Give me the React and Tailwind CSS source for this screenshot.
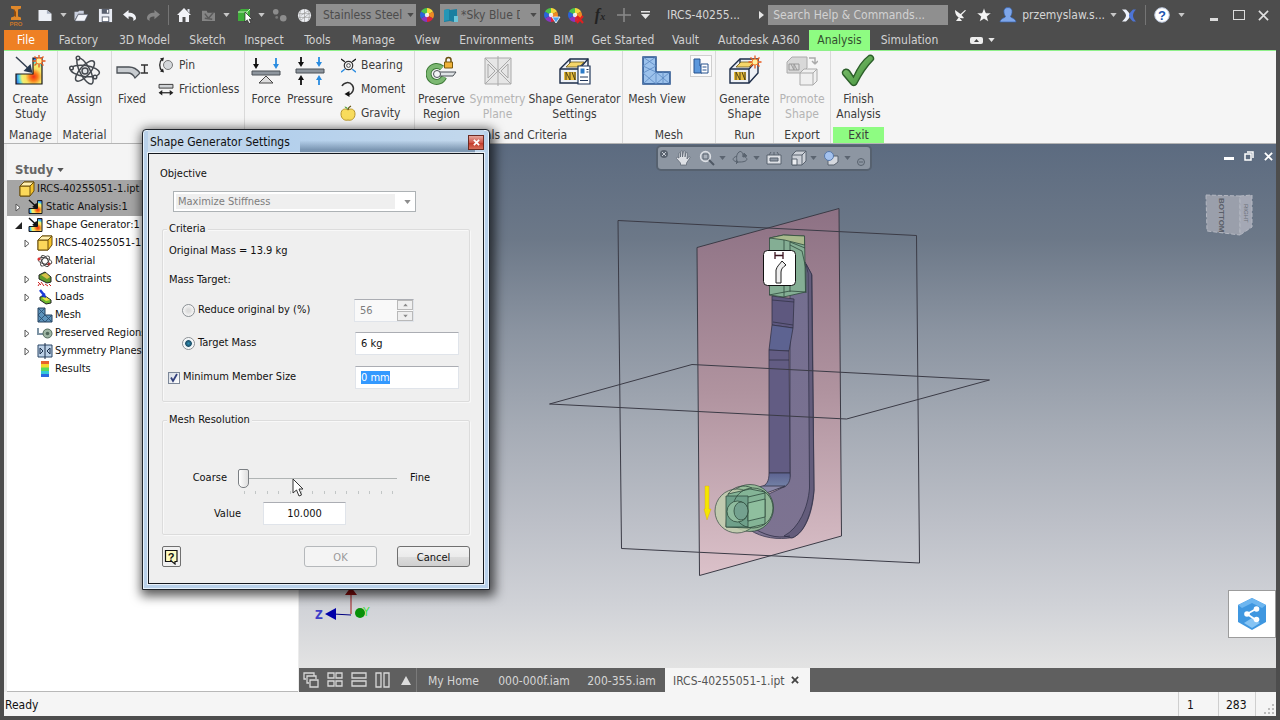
import React, { useEffect, useRef } from 'react'

/* ---------- shared bits ---------- */

const Caret = ({ className = 'text-[#c8c8c8]' }) => (
  <svg viewBox="0 0 8 5" className={'h-[4px] w-[7px] ' + className} aria-hidden="true">
    <path d="M0 0h8L4 5z" fill="currentColor" />
  </svg>
)

const Tool = ({ label, className = 'w-6', children }) => (
  <button type="button" aria-label={label} className={'flex h-[30px] shrink-0 items-center justify-center ' + className}>
    {children}
  </button>
)

const ColorWheel = ({ badge }) => (
  <svg viewBox="0 0 18 18" className="h-[18px] w-[18px]" aria-hidden="true">
    <path d="M8 9V2a7 7 0 0 1 6 3.5z" fill="#f5d93a" />
    <path d="M8 9l6-3.5a7 7 0 0 1 0 7z" fill="#f08a24" />
    <path d="M8 9l6 3.5A7 7 0 0 1 8 16z" fill="#d8243c" />
    <path d="M8 9v7a7 7 0 0 1-6-3.5z" fill="#8a35c0" />
    <path d="M8 9l-6 3.500a7 7 0 0 1 0-7z" fill="#2b63d8" />
    <path d="M8 9L2 5.500A7 7 0 0 1 8 2z" fill="#4cc24a" />
    <circle cx="8" cy="9" r="2.200" fill="#fff" opacity=".85" />
    {badge === 'down' && <path d="M9 11h8l-4 6z" fill="#4aa3ee" stroke="#fff" strokeWidth=".8" />}
    {badge === 'x' && <path d="M10 10l6 7M16 10l-6 7" stroke="#e02020" strokeWidth="2" />}
  </svg>
)

/* ---------- title bar ---------- */

function TitleBar() {
  return (
    <header className="flex h-[30px] items-center pr-1 text-xs text-[#d6d6d6]">
      <Tool label="Application menu" className="w-[31px]">
        <svg viewBox="0 0 20 24" className="h-6 w-5" aria-hidden="true">
          <path d="M5 3h10v2.500l-3 1v7l3 1V17H5v-2.500l3-1v-7l-3-1z" fill="#e0882a" />
          <path d="M8 6l2 3v5l-2-1z" fill="#8a4a10" />
          <text x="10" y="23" fontSize="6" textAnchor="middle" fill="#c8762a" fontFamily="Liberation Sans" fontWeight="700">PRO</text>
        </svg>
      </Tool>
      <Tool label="New" className="w-[27px]">
        <svg viewBox="0 0 16 14" className="h-[13px] w-4" aria-hidden="true"><path d="M1 1h9l5 4v8H1z" fill="#eceff6" /><path d="M10 1v4h5z" fill="#a9b0c0" /></svg>
      </Tool>
      <Tool label="New options" className="w-[11px]"><Caret /></Tool>
      <Tool label="Open">
        <svg viewBox="0 0 16 14" className="h-[13px] w-4" aria-hidden="true"><path d="M1 12V3h4l1-1h5v3H5z" fill="#c9cfde" /><path d="M1.500 13L5 6h10.500L12 13z" fill="#f3f5fa" stroke="#5c6478" strokeWidth=".6" /></svg>
      </Tool>
      <Tool label="Save">
        <svg viewBox="0 0 16 16" className="h-[15px] w-[15px]" aria-hidden="true"><path d="M1 1h14v14H1z" fill="#e8ebf3" /><path d="M4 1h8v5H4zM4 9h8v6H4z" fill="#59606f" /><path d="M5 10h6v4H5z" fill="#fff" /><path d="M9.500 2h1.500v3H9.500z" fill="#fff" /></svg>
      </Tool>
      <Tool label="Undo">
        <svg viewBox="0 0 16 14" className="h-[13px] w-[15px]" aria-hidden="true"><path d="M7 1v3c5 0 8 2 8 6 0 1-1 2-3 3 1-4-1-5-5-5v3L1 6z" fill="#f0f2f7" /></svg>
      </Tool>
      <Tool label="Redo">
        <svg viewBox="0 0 16 14" className="h-[13px] w-[15px]" aria-hidden="true"><path d="M9 1v3C4 4 1 6 1 10c0 1 1 2 3 3-1-4 1-5 5-5v3l6-5z" fill="#868686" /></svg>
      </Tool>
      <span className="mx-[3px] h-5 w-px shrink-0 bg-[#757575]" />
      <Tool label="Home">
        <svg viewBox="0 0 16 16" className="h-4 w-4" aria-hidden="true"><path d="M8 1l7 7h-2v7H9.500v-5h-3v5H3V8H1z" fill="#f1f2f7" /><path d="M11.500 2h2v4l-2-2z" fill="#dfe3ee" /></svg>
      </Tool>
      <Tool label="Team web">
        <svg viewBox="0 0 16 14" className="h-[13px] w-[15px]" aria-hidden="true"><path d="M1 2h5l1 2h8v9H1z" fill="#858585" /><path d="M4 5l4 5 5-6M4 10l8 1" stroke="#5a5a5a" strokeWidth="1.500" fill="none" /></svg>
      </Tool>
      <Tool label="Team web options" className="w-[12px]"><Caret /></Tool>
      <Tool label="Select priority">
        <svg viewBox="0 0 17 17" className="h-[17px] w-[17px]" aria-hidden="true"><path d="M2 5l3-3h9v9l-3 3H2z" fill="#3fae3a" /><path d="M2 5h9v9M11 5l3-3" stroke="#bff0b5" fill="none" /><path d="M9 5v10l2.300-2.200L13 16.500l1.800-.8-1.600-3.500h3z" fill="#fff" stroke="#222" strokeWidth=".7" /></svg>
      </Tool>
      <Tool label="Select options" className="w-[10px]"><Caret /></Tool>
      <Tool label="Local update" className="w-[26px]">
        <svg viewBox="0 0 16 16" className="h-[15px] w-[15px]" aria-hidden="true"><circle cx="4" cy="4" r="3" fill="#8d8d8d" /><circle cx="12" cy="11" r="3.500" fill="#8d8d8d" /><circle cx="5" cy="10" r="1.500" fill="#777" /></svg>
      </Tool>
      <Tool label="Material browser">
        <svg viewBox="0 0 16 16" className="h-[15px] w-[15px]" aria-hidden="true"><circle cx="8" cy="8" r="7" fill="#eceef2" /><path d="M1.500 6h13M1.500 10h13M8 1v14M4 2.500C2.500 6 2.500 10 4 13.500M12 2.500c1.500 3.500 1.500 7.500 0 11M4 8l8-5M4 13l9-7" stroke="#999" strokeWidth=".7" fill="none" /></svg>
      </Tool>
      <div className="relative flex shrink-0 items-center">
        <select aria-label="Material" className="h-[22px] w-[100px] appearance-none bg-[#8f8f8f] pl-[7px] text-[#4c4c4c]">
          <option>Stainless Steel</option>
        </select>
        <span className="pointer-events-none absolute right-[2px]"><Caret className="text-[#4a4a4a]" /></span>
      </div>
      <Tool label="Appearance"><ColorWheel /></Tool>
      <div className="relative flex shrink-0 items-center">
        <select aria-label="Appearance style" className="h-[22px] w-[100px] appearance-none bg-[#8f8f8f] pr-[20px] pl-[21px] text-[#4c4c4c]">
          <option>*Sky Blue Dark</option>
        </select>
        <svg viewBox="0 0 15 15" className="pointer-events-none absolute left-[4px] h-[15px] w-[15px]" aria-hidden="true"><path d="M0 2l5-1 1 1 7-1v11l-3 2-4-1-6 1z" fill="#197fa0" /><path d="M0 2l5-1v11l-5 1z" fill="#2596b6" /><path d="M10 8h4v6h-4z" fill="#6cc6da" /></svg>
        <span className="pointer-events-none absolute right-[3px]"><Caret className="text-[#4a4a4a]" /></span>
      </div>
      <Tool label="Adjust appearance"><ColorWheel badge="down" /></Tool>
      <Tool label="Clear appearance"><ColorWheel badge="x" /></Tool>
      <Tool label="Parameters"><span className="font-['Liberation_Serif',serif] text-base font-bold text-[#222] italic">f<span className="text-[10px]">x</span></span></Tool>
      <Tool label="Add command">
        <svg viewBox="0 0 14 14" className="h-[14px] w-[14px]" aria-hidden="true"><path d="M7 0v14M0 7h14" stroke="#8a8a8a" strokeWidth="1.500" /></svg>
      </Tool>
      <Tool label="Customize toolbar" className="w-[18px]">
        <svg viewBox="0 0 9 8" className="h-2 w-[9px]" aria-hidden="true"><path d="M0 0h9v1.500H0zM0 3h9L4.500 8z" fill="#e6e6e6" /></svg>
      </Tool>
      <div className="min-w-0 flex-1 pl-[13px] whitespace-nowrap">IRCS-40255...</div>
      <Tool label="Expand search" className="w-[14px]"><svg viewBox="0 0 5 8" className="h-2 w-[5px]" aria-hidden="true"><path d="M0 0l5 4-5 4z" fill="#e6e6e6" /></svg></Tool>
      <input aria-label="Search" placeholder="Search Help & Commands..." className="h-5 w-[180px] shrink-0 bg-[#8f8f8f] px-[5px] placeholder:text-[#d2d2d2]" />
      <Tool label="Communication center">
        <svg viewBox="0 0 14 14" className="h-[14px] w-[14px]" aria-hidden="true"><path d="M2 2c0 6 4 9 9 8l-2.500-3L13 2.500 12 2 7.500 6z" fill="#f2f2f2" /><path d="M3 13l3-4 3 4z" fill="#f2f2f2" /></svg>
      </Tool>
      <Tool label="Favorites">
        <svg viewBox="0 0 16 16" className="h-4 w-4" aria-hidden="true"><path d="M8 .5l2 5.300 5.500.2-4.300 3.500 1.500 5.500L8 12l-4.700 3 1.500-5.500L.5 6 6 5.800z" fill="#f4f4f4" stroke="#333" strokeWidth=".6" /></svg>
      </Tool>
      <button type="button" className="flex shrink-0 items-center gap-[5px] whitespace-nowrap">
        <svg viewBox="0 0 18 16" className="ml-[3px] h-4 w-[18px]" aria-hidden="true"><path d="M9 .5c3 0 4.500 2 4 5-.2 2-1 3-1.500 4 0 1.500 5 1.500 5.500 5.500H1C1.500 11 6.500 11 6.500 9.500 6 8.500 5.200 7.500 5 5.500c-.5-3 1-5 4-5z" fill="#7ea6ea" stroke="#3763ad" strokeWidth=".7" /></svg>
        <span>przemyslaw.s...</span>
        <Caret />
      </button>
      <Tool label="Exchange apps" className="mr-1 w-6">
        <svg viewBox="0 0 14 12" className="h-[13px] w-[14px]" aria-hidden="true"><path d="M0 0h4c2 2 4 4 4 6s-2 4-4 6H0c2-2 4-4 4-6S2 2 0 0z" fill="#eef2fb" /><path d="M14 0h-3C9 2 7 4 7 6s2 4 4 6h3c-2-2-3-4-3-6s1-4 3-6z" fill="#4d74d6" /></svg>
      </Tool>
      <span className="h-5 w-px shrink-0 bg-[#757575]" />
      <Tool label="Help" className="w-8">
        <svg viewBox="0 0 16 16" className="h-4 w-4" aria-hidden="true"><circle cx="8" cy="8" r="7.300" fill="#fff" stroke="#b8c4da" /><text x="8" y="12.500" textAnchor="middle" fontSize="13" fontWeight="700" fontFamily="Liberation Sans" fill="#1c55b0">?</text></svg>
      </Tool>
      <Caret />
      <Tool label="Minimize" className="ml-4 w-[25px]"><span className="mt-2 h-[3px] w-2 bg-[#dcdcdc]" /></Tool>
      <Tool label="Maximize" className="w-[25px]"><span className="h-[10px] w-3 border border-[#dcdcdc]" /></Tool>
      <Tool label="Close" className="w-[25px]"><svg viewBox="0 0 12 12" className="h-[11px] w-[11px]" aria-hidden="true"><path d="M1 1l10 10M11 1L1 11" stroke="#e0e0e0" strokeWidth="1.800" /></svg></Tool>
    </header>
  )
}

/* ---------- ribbon ---------- */

const TABS = [
  ['Factory', 'w-[61px]'], ['3D Model', 'w-[71px]'], ['Sketch', 'w-[55px]'], ['Inspect', 'w-[58px]'], ['Tools', 'w-[49px]'],
  ['Manage', 'w-[63px]'], ['View', 'w-[45px]'], ['Environments', 'w-[93px]'], ['BIM', 'w-[41px]'], ['Get Started', 'w-[78px]'],
  ['Vault', 'w-[47px]'], ['Autodesk A360', 'w-[100px]'],
]

function Tabs() {
  return (
    <nav className="mx-1 flex h-5 items-stretch text-xs text-[#d2d2d2]">
      <button type="button" className="w-11 bg-[#ee8024] text-white">File</button>
      {TABS.map(([t, w]) => (
        <button key={t} type="button" className={'shrink-0 whitespace-nowrap ' + w}>{t}</button>
      ))}
      <button type="button" className="w-[61px] bg-[#8efc82] text-[#33502f]">Analysis</button>
      <button type="button" className="w-[79px]">Simulation</button>
      <button type="button" aria-label="Ribbon display" className="ml-[21px] flex items-center gap-[5px]">
        <svg viewBox="0 0 13 7" className="h-[7px] w-[13px]" aria-hidden="true"><rect width="13" height="7" rx="2" fill="#ececec" /><path d="M4 5l2.500-3L9 5z" fill="#444" /></svg>
        <Caret className="text-[#e6e6e6]" />
      </button>
    </nav>
  )
}

const Big = ({ icon, children, className = '', disabled }) => (
  <button type="button" disabled={disabled} className={'flex shrink-0 flex-col items-center text-center leading-[15px] whitespace-nowrap ' + (disabled ? 'text-[#b4b4b4] ' : '') + className}>
    <span className="flex h-9 items-center">{icon}</span>
    <span className="mt-[3px]">{children}</span>
  </button>
)

const Small = ({ icon, children }) => (
  <button type="button" className="flex h-6 items-center gap-[5px]">
    <span className="flex w-4 justify-center">{icon}</span>{children}
  </button>
)

const Group = ({ title, hideTitle, className, exit, last, align = 'justify-center', children }) => (
  <section aria-label={title} className={'flex shrink-0 flex-col ' + (last ? '' : 'border-r border-[#d9d9d9] ') + className}>
    <div className={'flex flex-1 pt-[2px] ' + align}>{children}</div>
    {!hideTitle && <h2 className={'h-4 text-center leading-4 whitespace-nowrap ' + (exit ? 'mx-[2px] bg-[#8efc82]' : '')}>{title}</h2>}
  </section>
)

const Burst = ({ x, y }) => (
  <g transform={`translate(${x} ${y})`}>
    <path d="M0-6.500V6.500M-6.500 0H6.500M-4.500-4.500l9 9M4.500-4.500l-9 9" stroke="#e8581c" strokeWidth="1.300" />
    <circle r="3" fill="#fff0a0" stroke="#f08030" />
  </g>
)

const StudyIcon = ({ className = 'h-8 w-8', small }) => (
  <svg viewBox="0 0 32 32" className={className} aria-hidden="true">
    <defs>
      <radialGradient id="heat" cx=".68" cy=".72" r=".7">
        <stop offset="0" stopColor="#f03018" /><stop offset=".22" stopColor="#fb7a1a" /><stop offset=".45" stopColor="#f8e060" /><stop offset=".65" stopColor="#f2ee70" /><stop offset=".8" stopColor="#58d8e0" /><stop offset="1" stopColor="#2a62e8" />
      </radialGradient>
    </defs>
    <path d="M19 3h9v26H2V19h17z" fill="url(#heat)" stroke="#181818" strokeWidth={small ? 2 : 1.200} />
    <path d="M2 2l15 14" stroke={small ? '#111' : '#333f50'} strokeWidth={small ? 3 : 1.500} />
    <path d="M18.500 18l-2-9-7 7z" fill={small ? '#111' : '#26384f'} stroke={small ? '#111' : 'none'} strokeWidth="2" />
    {!small && <Burst x={25} y={6} />}
  </svg>
)

const Atom = ({ className = 'h-8 w-8' }) => (
  <svg viewBox="0 0 32 32" className={className} fill="none" stroke="#44494f" strokeWidth="1.500" aria-hidden="true">
    <ellipse cx="16" cy="16" rx="14.500" ry="5.500" transform="rotate(8 16 16)" />
    <ellipse cx="16" cy="16" rx="14.500" ry="5" transform="rotate(62 16 16)" />
    <ellipse cx="16" cy="16" rx="13" ry="5" transform="rotate(132 16 16)" />
    <circle cx="16" cy="16" r="3" fill="#e4e7ea" />
    <circle cx="9" cy="3" r="1.800" fill="#fff" /><circle cx="2.500" cy="13" r="1.800" fill="#fff" /><circle cx="26" cy="22" r="1.800" fill="#fff" />
  </svg>
)

const BoxFrame = ({ settings, burst }) => (
  <svg viewBox="0 0 34 32" className="h-8 w-[34px]" aria-hidden="true">
    <path d="M2 14L12 4h18v14l-9 10H2z" fill="#eef1f6" stroke="#1d2d48" strokeWidth="1.400" />
    <path d="M2 14h19v14M21 14l9-10M12 4v7" stroke="#1d2d48" strokeWidth="1.400" fill="none" />
    <path d="M8 12l5-5h13l-5 5z" fill="#f6d66a" stroke="#6b5b20" strokeWidth=".8" />
    <path d="M6 17h12v8H6z" fill="#e8bd3c" /><path d="M8 25v-8l4 8v-8M14 17l3 8v-8" stroke="#4c4015" strokeWidth="1" fill="none" />
    {settings && (
      <g>
        <path d="M20 11h12v18H20z" fill="#fff" stroke="#21375a" strokeWidth="1.200" /><path d="M22.500 13.500h4v5h-4z" fill="#2c7bc8" />
        <path d="M28.500 14.500h2M28.500 17h2M22 22h8M22 25.500h8" stroke="#21375a" strokeWidth="1" />
      </g>
    )}
    {burst && <Burst x={27} y={7} />}
  </svg>
)

const Mesh = ({ className = 'h-8 w-8' }) => (
  <svg viewBox="0 0 32 32" className={className} aria-hidden="true">
    <path d="M2 2h13v15h14v12H2z" fill="#9cc2ec" stroke="#24508c" strokeWidth="1.500" />
    <path d="M2 2l13 9-13 7 13 11M15 2L2 11l13 6L2 29M15 17l14 12M29 17L15 29M15 17v12M22 17v12" stroke="#5b88c0" strokeWidth=".8" fill="none" />
  </svg>
)

function Ribbon() {
  return (
    <div className="mx-1 flex h-[94px] border-t border-b border-t-[#8ff08a] border-b-[#b4b4b4] bg-[#f5f5f5] text-xs text-[#3c3c3c]">
      <Group title="Manage" className="w-[54px]">
        <Big icon={<StudyIcon />}>Create<br />Study</Big>
      </Group>
      <Group title="Material" className="w-[54px]">
        <Big icon={<Atom />}>Assign</Big>
      </Group>
      <Group title="Constraints" hideTitle align="justify-start" className="w-[133px]">
        <Big className="w-[40px]" icon={
          <svg viewBox="0 0 32 24" className="h-6 w-8" aria-hidden="true"><path d="M1 8h12c5 0 8 2 11 6l-5 5c-2-4-4-5-7-5H1z" fill="#c8ccd0" stroke="#4b5056" strokeWidth="1.300" /><path d="M25 6h7M25 14h7M28.500 6v8" stroke="#333" strokeWidth="1.400" /></svg>
        }>Fixed</Big>
        <div className="ml-[6px] flex flex-col">
          <Small icon={<svg viewBox="0 0 16 16" className="h-4 w-4" aria-hidden="true"><circle cx="10" cy="8" r="4.500" fill="#d5d8db" stroke="#777" /><path d="M4 2C1 5 1 11 4 14" stroke="#222" strokeWidth="1.300" fill="none" /><path d="M2 1.500l4-1-1 4zM2 14.500l4 1-1-4z" fill="#222" /></svg>}>Pin</Small>
          <Small icon={<svg viewBox="0 0 16 14" className="h-[13px] w-4" aria-hidden="true"><path d="M.5 1.500h15v4H.5z" fill="#d0d3d6" stroke="#333" /><path d="M2 10.500h12" stroke="#222" strokeWidth="1.300" /><path d="M0 10.500l4-3v6zM16 10.500l-4-3v6z" fill="#222" /></svg>}>Frictionless</Small>
        </div>
      </Group>
      <Group title="Loads" hideTitle align="justify-start pl-px" className="w-[170px]">
        <Big className="w-[40px]" icon={
          <svg viewBox="0 0 30 30" className="h-[30px] w-[30px]" aria-hidden="true"><path d="M1 15h28v4H1z" fill="#8d959d" stroke="#4b5056" /><path d="M15 20l7 7H8z" fill="#ddd" stroke="#444" /><path d="M5 2v7" stroke="#111" strokeWidth="1.800" /><path d="M2 8h6l-3 5z" fill="#111" /><path d="M25 2v7" stroke="#2a8ce0" strokeWidth="1.800" /><path d="M22 8h6l-3 5z" fill="#2a8ce0" /></svg>
        }>Force</Big>
        <Big className="w-[48px]" icon={
          <svg viewBox="0 0 30 30" className="h-[30px] w-[30px]" aria-hidden="true"><path d="M1 13h28v4H1z" fill="#8d959d" stroke="#4b5056" /><path d="M6 1v6M6 23v6" stroke="#111" strokeWidth="1.800" /><path d="M3 6h6l-3 5zM3 24h6l-3-5z" fill="#111" /><path d="M24 1v6M24 23v6" stroke="#2a8ce0" strokeWidth="1.800" /><path d="M21 6h6l-3 5zM21 24h6l-3-5z" fill="#2a8ce0" /></svg>
        }>Pressure</Big>
        <div className="ml-[6px] flex flex-col">
          <Small icon={<svg viewBox="0 0 16 16" className="h-[15px] w-[15px]" aria-hidden="true"><circle cx="8" cy="8" r="4.500" fill="none" stroke="#333" strokeWidth="1.300" /><circle cx="8" cy="8" r="2" fill="none" stroke="#444" /><path d="M0 1l4 3M16 1l-4 3" stroke="#111" strokeWidth="1.500" /><path d="M0 15l4-3M16 15l-4-3" stroke="#2a8ce0" strokeWidth="1.500" /></svg>}>Bearing</Small>
          <Small icon={<svg viewBox="0 0 16 16" className="h-4 w-4" aria-hidden="true"><path d="M2 5a6 6 0 1 1 6.500 8.500" fill="none" stroke="#333" strokeWidth="1.500" /><path d="M4.500 13l5-3v6z" fill="#111" /></svg>}>Moment</Small>
          <Small icon={<svg viewBox="0 0 16 16" className="h-4 w-4" aria-hidden="true"><path d="M8 5c3-2 7-1 7 4s-4 7-7 6C5 16 1 14 1 9s4-6 7-4z" fill="#f8dc5c" stroke="#b8962a" /><path d="M8 5c0-2 1-3 3-4" stroke="#6a5a1a" fill="none" strokeWidth="1.300" /><path d="M8 4C6 4 5 3 4.500 1.500c2 0 3 1 3.500 2.500z" fill="#58a03a" /></svg>}>Gravity</Small>
        </div>
      </Group>
      <Group title="Goals and Criteria" className="w-[208px]">
        <Big className="w-[50px]" icon={
          <svg viewBox="0 0 32 32" className="h-8 w-8" aria-hidden="true"><path d="M16 13A8 8 0 1 0 18 22" fill="none" stroke="#3e7a38" strokeWidth="6" /><path d="M16 13A8 8 0 1 0 18 22" fill="none" stroke="#7cb872" strokeWidth="4" /><path d="M9 17h21l-3 4H9z" fill="#dfe3e6" stroke="#4b5056" /><circle cx="11" cy="19" r="3.500" fill="#f3f5f6" stroke="#4b5056" /><path d="M20 9V5a2.500 2.500 0 0 1 5 0v4" stroke="#6a5010" fill="none" strokeWidth="1.500" /><path d="M18.500 7h8v6h-8z" fill="#efb33a" stroke="#7a5a10" /></svg>
        }>Preserve<br />Region</Big>
        <Big disabled className="w-[62px]" icon={
          <svg viewBox="0 0 28 30" className="h-[30px] w-7" fill="none" stroke="#a9a9a9" aria-hidden="true"><path d="M1 2h26v26H1z" fill="#e6e6e6" /><path d="M1 2l13 13L1 28M27 2L14 15l13 13M14 0v30M4 8v14l7-7zM24 8v14l-7-7z" /></svg>
        }>Symmetry<br />Plane</Big>
        <Big className="w-[92px]" icon={<BoxFrame settings />}>Shape Generator<br />Settings</Big>
      </Group>
      <Group title="Mesh" className="w-[93px]">
        <Big className="w-[62px]" icon={<Mesh />}>Mesh View</Big>
        <button type="button" aria-label="Mesh settings" className="mt-[2px] ml-[2px] flex h-[22px] w-[22px] items-center justify-center border border-[#cfcfcf] bg-[#fbfbfb]">
          <svg viewBox="0 0 16 16" className="h-4 w-4" aria-hidden="true"><path d="M1 1h6v7h2v7H1z" fill="#5c98dc" stroke="#24508c" /><path d="M8 6h7v9H8z" fill="#fff" stroke="#24508c" /><path d="M9.500 9h4M9.500 12h4" stroke="#24508c" /></svg>
        </button>
      </Group>
      <Group title="Run" className="w-[58px]">
        <Big icon={<BoxFrame burst />}>Generate<br />Shape</Big>
      </Group>
      <Group title="Export" className="w-[57px]">
        <Big disabled icon={
          <svg viewBox="0 0 32 32" className="h-8 w-8" aria-hidden="true"><path d="M1 7l5-5h15v11l-5 5H1z" fill="#d8d8d8" stroke="#aaa" /><path d="M3 9h10v6H3zM5 9l3 6V9l3 6" fill="none" stroke="#999" /><path d="M23 3h6v6M29 9l-3-3M29 9l3-3" stroke="#aaa" fill="none" strokeWidth="1.500" /><path d="M14 18l4-4h13v12l-4 4H14z" fill="#f0f0f0" stroke="#aaa" /><path d="M14 18h13v12M27 18l4-4" fill="none" stroke="#aaa" /></svg>
        }>Promote<br />Shape</Big>
      </Group>
      <Group title="Exit" exit last className="w-[55px]">
        <Big icon={
          <svg viewBox="0 0 34 34" className="h-[34px] w-[34px]" aria-hidden="true">
            <defs><linearGradient id="tick" x2="1" y2="1"><stop offset="0" stopColor="#86c873" /><stop offset="1" stopColor="#3e8c38" /></linearGradient></defs>
            <path d="M1.500 18c1-3 5-4 7-1l4 6C16 15 22 6 28 1.500c3-1 5 1.500 4.500 4C26 12 20 21 15.500 30c-1.500 2-4 2-5.500 0L2 20.500c-.5-1-.8-1.500-.5-2.500z" fill="url(#tick)" stroke="#2c5f2a" strokeWidth="1.400" />
          </svg>
        }>Finish<br />Analysis</Big>
      </Group>
    </div>
  )
}

/* ---------- model browser ---------- */

const Cube = () => (
  <svg viewBox="0 0 16 16" className="h-4 w-4" aria-hidden="true"><path d="M1 5l4-4h10v9l-4 5H1z" fill="#f6c42a" stroke="#6b4f0a" /><path d="M1 5h10v10H1z" fill="#fbd85a" stroke="#6b4f0a" /><path d="M1 5l4-4h10l-4 4z" fill="#fff0b0" stroke="#6b4f0a" /></svg>
)

const TREE = [
  { t: 'IRCS-40255051-1.ipt', d: 0, sel: true, icon: <Cube /> },
  { t: 'Static Analysis:1', d: 1, sel: true, arrow: 'closed', icon: <StudyIcon small className="h-4 w-4" /> },
  { t: 'Shape Generator:1', d: 1, arrow: 'open', icon: <StudyIcon small className="h-4 w-4" /> },
  { t: 'IRCS-40255051-1.ipt', d: 2, arrow: 'closed', icon: <Cube /> },
  { t: 'Material', d: 2, icon: <svg viewBox="0 0 16 16" className="h-4 w-4" fill="none" stroke="#444" aria-hidden="true"><ellipse cx="8" cy="8" rx="7" ry="3" transform="rotate(14 8 8)" /><ellipse cx="8" cy="8" rx="6" ry="3" transform="rotate(60 8 8)" /><ellipse cx="8" cy="8" rx="6" ry="3" transform="rotate(130 8 8)" /><circle cx="2" cy="6" r="1.500" fill="#d33" stroke="none" /><circle cx="12" cy="11" r="1.500" fill="#a33" stroke="none" /></svg> },
  { t: 'Constraints', d: 2, arrow: 'closed', icon: <svg viewBox="0 0 16 16" className="h-4 w-4" aria-hidden="true"><path d="M2 4l6-3 6 5v5l-4 1-8-4z" fill="#5f9a2c" stroke="#222" /><path d="M4 4l5-2 4 4-3 2z" fill="#d8c04a" /><path d="M1 11l3 3M4 11l3 4M8 13l3 2M12 13l2 2M1 15l2-3" stroke="#c22" /></svg> },
  { t: 'Loads', d: 2, arrow: 'closed', icon: <svg viewBox="0 0 16 16" className="h-4 w-4" aria-hidden="true"><path d="M3 8l5-1 6 4v3l-5 1-6-4z" fill="#6cb82e" stroke="#222" /><path d="M5 9l4-1 4 3-4 1z" fill="#e8e04a" /><path d="M3 1l4 5" stroke="#1a3ad8" strokeWidth="2.500" /><path d="M9 9L4 7l4-3z" fill="#1a3ad8" /></svg> },
  { t: 'Mesh', d: 2, icon: <svg viewBox="0 0 16 16" className="h-4 w-4" aria-hidden="true"><path d="M1 1h7v7h7v7H1z" fill="#5d93bb" stroke="#24405c" /><path d="M1 1l7 7-7 7M8 1L1 8l7 7M8 8l7 7M15 8l-7 7" stroke="#27496a" strokeWidth=".8" fill="none" /></svg> },
  { t: 'Preserved Regions', d: 2, arrow: 'closed', icon: <svg viewBox="0 0 16 16" className="h-4 w-4" aria-hidden="true"><path d="M1 3v6h6" stroke="#7d93a4" strokeWidth="2" fill="none" /><circle cx="10.500" cy="8.500" r="4.500" fill="#9fb6a4" stroke="#50685a" /><circle cx="10.500" cy="8.500" r="1.800" fill="#50685a" /></svg> },
  { t: 'Symmetry Planes', d: 2, arrow: 'closed', icon: <svg viewBox="0 0 16 16" className="h-4 w-4" aria-hidden="true"><path d="M1 2h14v12H1z" fill="#bcd0e6" stroke="#2b4666" /><path d="M8 0v16M3 5v6l3-3zM13 5v6l-3-3z" stroke="#1b2f4a" fill="none" /></svg> },
  { t: 'Results', d: 2, icon: <svg viewBox="0 0 16 16" className="h-4 w-4" aria-hidden="true"><path d="M4 0h8v3.500H4z" fill="#e8602c" /><path d="M4 3h8v4H4z" fill="#f3d72e" /><path d="M4 6.500h8v4H4z" fill="#5cd85c" /><path d="M4 10h8v3H4z" fill="#35c8d8" /><path d="M4 13h8v3H4z" fill="#2b6ae0" /></svg> },
]

const PAD = ['pl-[12px]', 'pl-[6px]', 'pl-[15px]']

function Browser() {
  return (
    <aside className="mr-px flex w-[294px] shrink-0 flex-col border-l-[3px] border-[#ececec] bg-white text-[11px] text-[#111]">
      <div className="flex h-9 items-end bg-[#f4f4f4] pb-[2px] pl-2">
        <button type="button" className="flex items-center gap-1 text-[13px] leading-4 font-bold text-[#666]">Study <Caret className="text-[#555]" /></button>
      </div>
      <ul className="flex-1 overflow-hidden">
        {TREE.map((n, i) => (
          <li key={i} className={'flex h-[18px] items-center whitespace-nowrap ' + PAD[n.d] + (n.sel ? ' bg-[#a5a5a5]' : '')}>
            {n.d > 0 && (
              <span className="mr-[6px] w-[9px]">
                {n.arrow === 'closed' && <svg viewBox="0 0 6 9" className="ml-[2px] h-[9px] w-[6px]" aria-hidden="true"><path d="M1 1l4 3.500L1 8z" fill="#fff" stroke="#555" /></svg>}
                {n.arrow === 'open' && <svg viewBox="0 0 7 7" className="ml-[2px] h-[7px] w-[7px]" aria-hidden="true"><path d="M7 0v7H0z" fill="#222" /></svg>}
              </span>
            )}
            <span className="flex shrink-0">{n.icon}</span>
            <span className="ml-[2px] pt-px">{n.t}</span>
          </li>
        ))}
      </ul>
      <div className="h-px bg-[#b8b8b8]" />
    </aside>
  )
}

/* ---------- graphics window ---------- */

const Part = () => (
  <svg viewBox="299 144 977 524" className="absolute inset-0 h-full w-full" aria-label="Model view">
    <defs>
      <linearGradient id="plane" x1="0" y1="0" x2="0" y2="1"><stop offset="0" stopColor="#8d7184" /><stop offset=".5" stopColor="#b0939f" /><stop offset="1" stopColor="#dbc1c9" /></linearGradient>
      <linearGradient id="side" x1="0" y1="0" x2="0" y2="1"><stop offset="0" stopColor="#736e90" /><stop offset="1" stopColor="#7d7391" /></linearGradient>
      <linearGradient id="fillet" x1="0" y1="0" x2="0" y2="1"><stop offset="0" stopColor="#5d6391" /><stop offset="1" stopColor="#7f92b2" /></linearGradient>
    </defs>
    <path d="M697 247.500L839 208.500 841.500 536 699.500 575.500z" fill="url(#plane)" />
    {/* lever body */}
    <path d="M790 290L805 262 812 275 814 490C813 510 806 532 793 537.500 778 540 762 538 750 530L745 505 786 486 790 476z" fill="url(#side)" stroke="#3a3a50" strokeWidth=".8" />
    <path d="M806 264L811.500 274 814 490C812 512 805 533 792 538L784 536C799 528 808 508 809.500 488L808 273z" fill="#635c7b" stroke="#33334a" strokeWidth=".8" />
    <path d="M772 296l22 3-1 29-21-3z" fill="#5e587f" stroke="#333348" strokeWidth=".8" />
    <path d="M772 325l21 3-4 23-20-1z" fill="#5d6391" stroke="#333348" strokeWidth=".8" />
    <path d="M769 350l20 1 1 122-21 0z" fill="#625c83" stroke="#333348" strokeWidth=".8" />
    <path d="M769 360h20M772 300l22 2M773 322l20 3" stroke="#333348" strokeWidth=".8" />
    <path d="M769 473h21c1 8-2 12-6 14l-32 7-4-2 13-5c6-2 8-6 8-14z" fill="url(#fillet)" stroke="#333348" strokeWidth=".8" />
    <path d="M748 492l14-6 23 0-37 14z" fill="#8b89a9" stroke="#333348" strokeWidth=".8" />
    <path d="M750 526c14 9 26 13 40 10" stroke="#2f2f45" strokeWidth=".8" fill="none" />
    {/* preserved top block */}
    <path d="M769.500 238l14-3 21 1 1 56-22 5-14-2z" fill="#84ae94" stroke="#2e4a3c" strokeWidth=".8" />
    <path d="M769.500 238l14-3 21 1v9l-20-5z" fill="#a8b98c" stroke="#2e4a3c" strokeWidth=".8" />
    <path d="M784 240v57M790 242v50M790 245l12 6 4 18v24M769 295l21-4 16 1M790 242l15 6" stroke="#2e4a3c" strokeWidth=".8" fill="none" />
    {/* preserved lower boss */}
    <g stroke="#2e4a3c" strokeWidth=".8">
      <circle cx="750" cy="508" r="23.500" fill="#94bf98" opacity=".9" />
      <circle cx="737" cy="511" r="22" fill="#c0cfae" opacity=".85" />
      <path d="M728 494l22-5 15 3v32l-17 4-22-1z" fill="#84b496" />
      <path d="M726 496h22v31h-22z" fill="#6fa08a" />
      <path d="M748 503l17-4v18l-17 4z" fill="#8fbf9e" />
      <circle cx="753" cy="508" r="20" fill="none" />
      <path d="M728 494c6-8 16-10 24-6M748 497l17-4" fill="none" />
      <circle cx="737.500" cy="511.500" r="10.500" fill="#8fbb9e" />
      <ellipse cx="741" cy="511" rx="7" ry="9" fill="#74a18f" />
    </g>
    {/* work planes */}
    <g fill="none" stroke="#3b3b46">
      <path d="M697 247.500L839 208.500 841.500 536 699.500 575.500z" />
      <path d="M618 220.500L916.500 235.500 919.500 563 621.500 548.500z" />
      <path d="M549.500 404L692 364.500 989.500 380 846.500 419z" />
    </g>
    {/* gravity arrow */}
    <path d="M705 486h4v23h2l-4 11-3-11h1z" fill="#f5e600" stroke="#d9a800" strokeWidth=".4" />
    {/* fixed constraint marker */}
    <rect x="763.500" y="250.500" width="32" height="35" rx="4" fill="#fff" stroke="#111" />
    <path d="M775 252v7M783 252v7M775 255.500h8" stroke="#3c1420" strokeWidth="1.300" />
    <path d="M776 283v-13c1-4 4-6 6-9l4 4c-3 2-5 4-5 7v11z" fill="#eee" stroke="#222" />
    {/* axis triad */}
    <path d="M351 614v-20" stroke="#a01818" />
    <path d="M345 595l6-8 6 8z" fill="#8a0e0e" />
    <path d="M351 615l-18-1" stroke="#000080" /><path d="M325 614l11-6v12z" fill="#0000a8" />
    <circle cx="360" cy="613" r="5" fill="#089008" />
    <text x="315" y="619" fontSize="12" fill="#3f3fc8" fontFamily="DejaVu Sans Condensed" fontWeight="700">Z</text>
    <text x="363" y="616" fontSize="12" fill="#40e040" fontFamily="DejaVu Sans Condensed">Y</text>
    {/* view cube */}
    <path d="M1206 195l34 1v39l-33-4z" fill="#9a9fab" stroke="#b4b8c2" strokeDasharray="4 2" />
    <path d="M1240 196l12-1v32l-12 8z" fill="#a4a8b5" stroke="#b4b8c2" strokeDasharray="4 2" />
    <text transform="translate(1219 198) rotate(90)" fontSize="8" fontWeight="700" fill="#5b6069" fontFamily="Liberation Sans">BOTTOM</text>
    <text transform="translate(1244 204) rotate(90)" fontSize="6" fill="#6b7079" fontFamily="Liberation Sans">RIGHT</text>
  </svg>
)

function NavBar() {
  const c = 'text-[#5b6470]'
  return (
    <div className="absolute top-px left-[357px] flex h-[26px] w-[216px] items-center rounded-[5px] border-2 border-[#56616f] bg-[#8d96a2]">
      <button type="button" aria-label="Close navigation bar" className="mb-2 flex w-3 justify-center"><svg viewBox="0 0 8 8" className="h-2 w-2" aria-hidden="true"><circle cx="4" cy="4" r="4" fill="#59626e" /><path d="M2 2l4 4M6 2L2 6" stroke="#c5cad2" /></svg></button>
      <button type="button" aria-label="Pan" className="flex w-[25px] justify-center">
        <svg viewBox="0 0 16 16" className="h-4 w-4" aria-hidden="true"><path d="M4 8V3.500c0-1 1.500-1 1.500 0V7l.5-5.500c0-1 1.500-1 1.500 0V7L8.500 1.500c0-1 1.500-1 1.500 0V7l1-4c.3-1 1.500-.7 1.500.3L12 9l1.500-2c1-.8 2 0 1.300 1L11.500 13v2H5.500v-2L1.500 8.500c-.5-1 .6-1.700 1.300-1z" fill="#dde0e5" stroke="#59626e" strokeWidth=".7" /></svg>
      </button>
      <button type="button" aria-label="Zoom" className="flex w-[24px] justify-center">
        <svg viewBox="0 0 16 16" className="h-4 w-4" aria-hidden="true"><circle cx="6.500" cy="6.500" r="5" fill="#aab1bb" stroke="#dde0e5" strokeWidth="1.300" /><path d="M4 4h5v5H4z" fill="none" stroke="#59626e" /><path d="M10 10l5 5" stroke="#4f5864" strokeWidth="2" /></svg>
      </button>
      <Caret className={c} />
      <button type="button" aria-label="Orbit" className="flex w-[27px] justify-center">
        <svg viewBox="0 0 16 16" className="h-4 w-4" fill="none" stroke="#5a6470" aria-hidden="true"><path d="M5 6C-1 8 0 12 8 12s9-4 3-6" /><path d="M6 13c-2-3-2-9 1-11 3-2 4 2 4 5" /><path d="M12 3l3 3-4 1zM4 10l2 2-2 2" fill="#5a6470" /></svg>
      </button>
      <Caret className={c} />
      <button type="button" aria-label="Look at" className="flex w-[28px] justify-center">
        <svg viewBox="0 0 16 14" className="h-[14px] w-4" aria-hidden="true"><path d="M1 4h14v9H1z" fill="#dde0e5" stroke="#59626e" /><path d="M4 7h8v3H4z" fill="#8d96a2" stroke="#59626e" /><path d="M3 4l2-3M13 4l-2-3M8 4V1" stroke="#59626e" /></svg>
      </button>
      <button type="button" aria-label="View faces" className="flex w-[22px] justify-center">
        <svg viewBox="0 0 16 16" className="h-4 w-4" aria-hidden="true"><path d="M1 5l4-4h10v10l-4 4H1z" fill="#ccd0d7" stroke="#59626e" /><path d="M1 5h10v10M11 5l4-4" fill="none" stroke="#59626e" /><path d="M1 9h5v6H1z" fill="#eceef1" stroke="#59626e" /></svg>
      </button>
      <Caret className={c} />
      <button type="button" aria-label="Visual style" className="flex w-[27px] justify-center">
        <svg viewBox="0 0 16 16" className="h-4 w-4" aria-hidden="true"><path d="M5 6h10v6l-4 3H5z" fill="#d5d8de" stroke="#59626e" /><circle cx="6" cy="6" r="4.500" fill="#a4c2ee" stroke="#5878a8" /></svg>
      </button>
      <Caret className={c} />
      <button type="button" aria-label="Navigation options" className="mt-2 flex flex-1 justify-center"><svg viewBox="0 0 8 8" className="h-2 w-2" aria-hidden="true"><circle cx="4" cy="4" r="3.500" fill="none" stroke="#59626e" /><path d="M2 4h4" stroke="#59626e" /></svg></button>
    </div>
  )
}

function Viewport() {
  return (
    <div className="relative min-h-0 flex-1 bg-[linear-gradient(#5c6b80_0%,#6c7888_18%,#8b94a1_36%,#a5abb5_54%,#bcbfc7_72%,#d0d2d7_88%,#e3e3e3_100%)]">
      <Part />
      <NavBar />
      <div className="absolute top-[7px] right-[3px] flex items-center gap-[10px]">
        <button type="button" aria-label="Minimize document"><span className="mt-1 block h-[3px] w-[10px] bg-white" /></button>
        <button type="button" aria-label="Restore document"><svg viewBox="0 0 10 10" className="h-[10px] w-[10px]" fill="none" stroke="#fff" strokeWidth="1.500" aria-hidden="true"><path d="M1 3h6v6H1zM3 1h6v6" /></svg></button>
        <button type="button" aria-label="Close document"><svg viewBox="0 0 10 10" className="h-[9px] w-[9px]" stroke="#fff" strokeWidth="2" aria-hidden="true"><path d="M1 1l8 8M9 1L1 9" /></svg></button>
      </div>
      <button type="button" aria-label="Share" className="absolute right-0 bottom-[30px] flex h-12 w-12 items-center justify-center border border-[#9c9c9c] bg-white">
        <svg viewBox="0 0 28 32" className="h-8 w-7" aria-hidden="true"><path d="M14 0l14 7v17l-14 8L0 24V7z" fill="#3f97e0" /><path d="M14 0l14 7-4 3-10-5L4 10 0 7z" fill="#6db6f0" /><path d="M14 20l8 5-8 5-8-5z" fill="#86c4f4" /><path d="M18 11l-9 5 9 6" stroke="#fff" strokeWidth="1.800" fill="none" /><circle cx="18.500" cy="11" r="2.800" fill="#fff" /><circle cx="9" cy="16" r="2.800" fill="#fff" /><circle cx="18.500" cy="21.500" r="2.800" fill="#fff" /></svg>
      </button>
    </div>
  )
}

const Win = ({ label, children }) => (
  <button type="button" aria-label={label} className="flex w-6 items-center justify-center">
    <svg viewBox="0 0 16 16" className="h-4 w-4" fill="none" stroke="#d8d8d8" strokeWidth="1.300" aria-hidden="true">{children}</svg>
  </button>
)

function DocTabs() {
  return (
    <div className="flex h-6 bg-[#5f5f5f] text-xs text-[#d6d6d6]">
      <Win label="Cascade"><path d="M3 7H1V1h10v3M6 11H4V4h9v3M7 8h8v7H7z" /></Win>
      <Win label="Arrange"><path d="M1 1h6v5H1zM9 1h6v5H9zM1 9h6v5H1zM9 9h6v5H9z" /></Win>
      <Win label="Tile horizontally"><path d="M1 1h14v5H1zM1 9h14v5H1z" /></Win>
      <Win label="Tile vertically"><path d="M1 1h5v14H1zM9 1h5v14H9z" /></Win>
      <button type="button" aria-label="More" className="flex w-[22px] items-center justify-center border-r border-[#7a7a7a]"><svg viewBox="0 0 10 9" className="h-[9px] w-[10px]" aria-hidden="true"><path d="M5 0l5 9H0z" fill="#dcdcdc" /></svg></button>
      <button type="button" className="w-[73px] pt-px">My Home</button>
      <button type="button" className="w-[88px] pt-px">000-000f.iam</button>
      <button type="button" className="w-[87px] pt-px">200-355.iam</button>
      <div className="flex w-[145px] items-center gap-[6px] bg-[#f5f5f5] pl-2 text-[#555]">
        <button type="button" className="pt-px whitespace-nowrap">IRCS-40255051-1.ipt</button>
        <button type="button" aria-label="Close tab"><svg viewBox="0 0 9 9" className="h-2 w-2" stroke="#444" strokeWidth="2" aria-hidden="true"><path d="M1 1l7 7M8 1L1 8" /></svg></button>
      </div>
    </div>
  )
}

/* ---------- dialog ---------- */

const GroupBox = ({ title, className, children }) => (
  <div role="group" aria-label={title} className="relative pt-2">
    <div className={'rounded-[2px] border border-[#dcdcdc] shadow-[inset_1px_1px_0_#f8f8f8,1px_1px_0_#f8f8f8] ' + className}>{children}</div>
    <span className="absolute top-0 left-[5px] bg-[#efefef] px-[2px] leading-4">{title}</span>
  </div>
)

const FIELD = 'h-[23px] border border-[#e0e4ea] border-t-[#abadb3] bg-white pb-px '
const RADIO = "h-[13px] w-[13px] shrink-0 appearance-none rounded-full border border-[#8a8f94] bg-[radial-gradient(circle,#dcdcdc_20%,#f6f6f6_70%)] checked:bg-[radial-gradient(circle,#2f8fb4_0,#1b4e68_38%,#e8f0f4_48%,#fff_70%)] "

function Dialog() {
  const size = useRef(null)
  useEffect(() => {
    size.current.focus()
    size.current.select()
  }, [])
  return (
    <div role="dialog" aria-label="Shape Generator Settings" className="absolute top-[129px] left-[142px] flex w-[348px] flex-col rounded-t-[4px] border border-[#20242a] bg-[#b9d1ea] px-[5px] pb-[5px] text-[11px] text-[#111] shadow-[2px_3px_11px_3px_rgba(0,0,0,0.65),inset_0_0_0_1px_#e6f1fb]">
      <div className="flex h-[23px] items-center justify-between bg-[linear-gradient(180deg,transparent_45%,#54708e99_85%),linear-gradient(90deg,#cfdfee,#b4d0ec_40%,#c3d8ec)] bg-[length:175px_100%,100%_100%] bg-[position:152px_0px,0px_0px] bg-no-repeat pt-px pl-[2px] text-xs">
        <span>Shape Generator Settings</span>
        <button type="button" aria-label="Close" className="flex h-[15px] w-4 items-center justify-center border border-[#6b2a22] bg-[linear-gradient(#e6a79c_0%,#d0574a_50%,#c23a2a_55%,#d8705c_100%)]">
          <svg viewBox="0 0 8 8" className="h-[7px] w-[7px]" stroke="#fff" strokeWidth="2" aria-hidden="true"><path d="M1 1l6 6M7 1L1 7" /></svg>
        </button>
      </div>
      <form className="border border-[#14181e] bg-[#efefef] px-[14px] pt-3 pb-4 outline outline-white/70" onSubmit={(e) => e.preventDefault()}>
        <label htmlFor="objective" className="-ml-[3px] block leading-4">Objective</label>
        <div className="relative mt-[9px] ml-[10px] w-[243px]">
          <select id="objective" disabled className="block h-[21px] w-full appearance-none border border-[#adb2b5] bg-[#efefef] pt-px pl-1 text-[#7d7d7d] opacity-100 shadow-[inset_0_0_0_2px_#fff,inset_-20px_0_0_#fff]">
            <option>Maximize Stiffness</option>
          </select>
          <span className="pointer-events-none absolute top-[9px] right-[5px] flex"><Caret className="text-[#8d8d8d]" /></span>
        </div>
        <div className="mt-[9px] -mr-px -ml-px">
          <GroupBox title="Criteria" className="h-[173px] pr-[10px] pl-[6px]">
            <p className="pt-[13px] leading-4">Original Mass = 13.9 kg</p>
            <p className="mt-[13px] leading-4">Mass Target:</p>
            <div className="mt-[11px] flex h-[23px] items-center pl-[13px]">
              <input type="radio" name="target" id="reduce" className={RADIO} />
              <label htmlFor="reduce" className="ml-[3px] flex-1">Reduce original by (%)</label>
              <div className="mr-[45px] flex w-[60px] border border-[#e0e4ea] border-t-[#abadb3] bg-[#f9f9f9]">
                <input aria-label="Reduce percentage" disabled defaultValue="56" className="h-[21px] w-[42px] pb-px pl-[5px] text-[#7d7d7d]" />
                <div className="flex flex-col justify-between">
                  <button type="button" disabled aria-label="Increase" className="flex h-[10px] w-4 items-center justify-center border border-[#b9b9b9] bg-[#efefef]"><Caret className="rotate-180 scale-75 text-[#8a8a8a]" /></button>
                  <button type="button" disabled aria-label="Decrease" className="flex h-[10px] w-4 items-center justify-center border border-[#b9b9b9] bg-[#efefef]"><Caret className="scale-75 text-[#8a8a8a]" /></button>
                </div>
              </div>
            </div>
            <div className="mt-[10px] flex h-[23px] items-center pl-[13px]">
              <input type="radio" name="target" id="mass" defaultChecked className={RADIO} />
              <label htmlFor="mass" className="ml-[3px] flex-1">Target Mass</label>
              <input aria-label="Target mass value" defaultValue="6 kg" className={FIELD + 'w-[104px] pl-[5px]'} />
            </div>
            <div className="mt-[11px] -ml-px flex h-[23px] items-center">
              <input type="checkbox" id="member" defaultChecked className="h-[12px] w-[12px] shrink-0 appearance-none border border-[#7c8798] bg-[#e9edf2] checked:bg-[linear-gradient(135deg,#d5dbe4,#fff)]" />
              <svg viewBox="0 0 10 10" className="pointer-events-none -ml-[11px] h-[10px] w-[10px] shrink-0" aria-hidden="true"><path d="M2 4.500l2 3.500 4-7" stroke="#32407c" strokeWidth="1.800" fill="none" /></svg>
              <label htmlFor="member" className="ml-[4px] flex-1">Minimum Member Size</label>
              <input ref={size} aria-label="Minimum member size value" defaultValue="0 mm" className={FIELD + 'w-[104px] border-[#b5cfe7] border-t-[#3d7bad] pl-[5px] outline-none selection:bg-[#3399ff] selection:text-white'} />
            </div>
          </GroupBox>
        </div>
        <div className="mt-[10px] -mr-px -ml-px">
          <GroupBox title="Mesh Resolution" className="h-[115px]">
            <div className="flex items-center pt-[47px]">
              <label htmlFor="res" className="w-[64px] text-right">Coarse</label>
              <input id="res" type="range" min="0" max="13" defaultValue="0" className="mx-[11px] h-5 w-[159px] appearance-none bg-[linear-gradient(#b0b4b4,#b0b4b4)] bg-[length:100%_1px] bg-center bg-no-repeat [&::-webkit-slider-thumb]:h-[19px] [&::-webkit-slider-thumb]:w-[11px] [&::-webkit-slider-thumb]:appearance-none [&::-webkit-slider-thumb]:rounded-t-[2px] [&::-webkit-slider-thumb]:rounded-b-[5px] [&::-webkit-slider-thumb]:border [&::-webkit-slider-thumb]:border-[#7b7f83] [&::-webkit-slider-thumb]:bg-[linear-gradient(90deg,#fff,#dedede)]" />
              <span className="ml-[2px]">Fine</span>
            </div>
            <div className="mt-[3px] ml-[81px] flex w-[149px] justify-between" aria-hidden="true">
              {Array.from({ length: 14 }, (_, i) => <span key={i} className="h-[3px] w-px bg-[#c2c6c6]" />)}
            </div>
            <div className="mt-2 flex items-center">
              <label htmlFor="value" className="w-[78px] pt-px text-right">Value</label>
              <input id="value" defaultValue="10.000" className={FIELD + 'ml-[22px] w-[83px] text-center'} />
            </div>
          </GroupBox>
        </div>
        <div className="mt-[11px] -mr-px -ml-px flex items-center">
          <button type="button" aria-label="Help" className="flex h-[21px] w-[19px] items-center justify-center rounded-[2px] border border-[#707070] bg-[#f0f0f0]">
            <svg viewBox="0 0 15 16" className="h-4 w-[15px]" aria-hidden="true"><path d="M1.500 1.500h11.500v11h-2v2.500l-3-2.500H1.500z" fill="#fffbc0" stroke="#111" strokeWidth="1.200" /><text x="7.200" y="11.500" fontSize="11" fontWeight="700" textAnchor="middle" fontFamily="Liberation Sans" fill="#111">?</text></svg>
          </button>
          <button type="submit" disabled className="mr-5 ml-auto h-[21px] w-[73px] rounded-[3px] border border-[#b5b8bb] bg-[#f4f4f4] pt-[2px] leading-4 text-[#9a9a9a]">OK</button>
          <button type="button" className="h-[21px] w-[73px] rounded-[3px] border border-[#707070] bg-[linear-gradient(#f3f3f3_0%,#ebebeb_50%,#dddddd_50%,#cfcfcf_100%)] pt-[2px] leading-4">Cancel</button>
        </div>
      </form>
      <svg viewBox="0 0 12 19" className="pointer-events-none absolute top-[348px] left-[149px] h-[19px] w-3" aria-hidden="true"><path d="M1 1v14l3.500-3 2.500 6 2.500-1-2.500-6H11z" fill="#fff" stroke="#333" /></svg>
    </div>
  )
}

export default function App() {
  return (
    <div className="relative flex min-h-screen flex-col bg-[#4d4d4d] font-['DejaVu_Sans_Condensed','Noto_Sans',sans-serif]">
      <TitleBar />
      <Tabs />
      <Ribbon />
      <main className="mx-1 flex flex-1 bg-[#ececec]">
        <Browser />
        <div className="flex min-w-0 flex-1 flex-col">
          <Viewport />
          <DocTabs />
        </div>
      </main>
      <footer className="mx-1 mb-1 flex h-6 items-center bg-[#f5f5f5] text-xs text-[#111]">
        <span className="flex-1 pt-px pl-px">Ready</span>
        <span className="flex h-full w-10 items-center border-l border-[#cfcfcf] pt-px pl-2">1</span>
        <span className="flex h-full w-[38px] items-center border-x border-[#cfcfcf] pt-px pl-[7px]">283</span>
        <svg viewBox="0 0 20 24" className="h-6 w-5" aria-hidden="true"><path d="M16 12h2v2h-2zM12 16h2v2h-2zM16 16h2v2h-2zM8 20h2v2H8zM12 20h2v2h-2zM16 20h2v2h-2z" fill="#bdbdbd" /></svg>
      </footer>
      <Dialog />
    </div>
  )
}
